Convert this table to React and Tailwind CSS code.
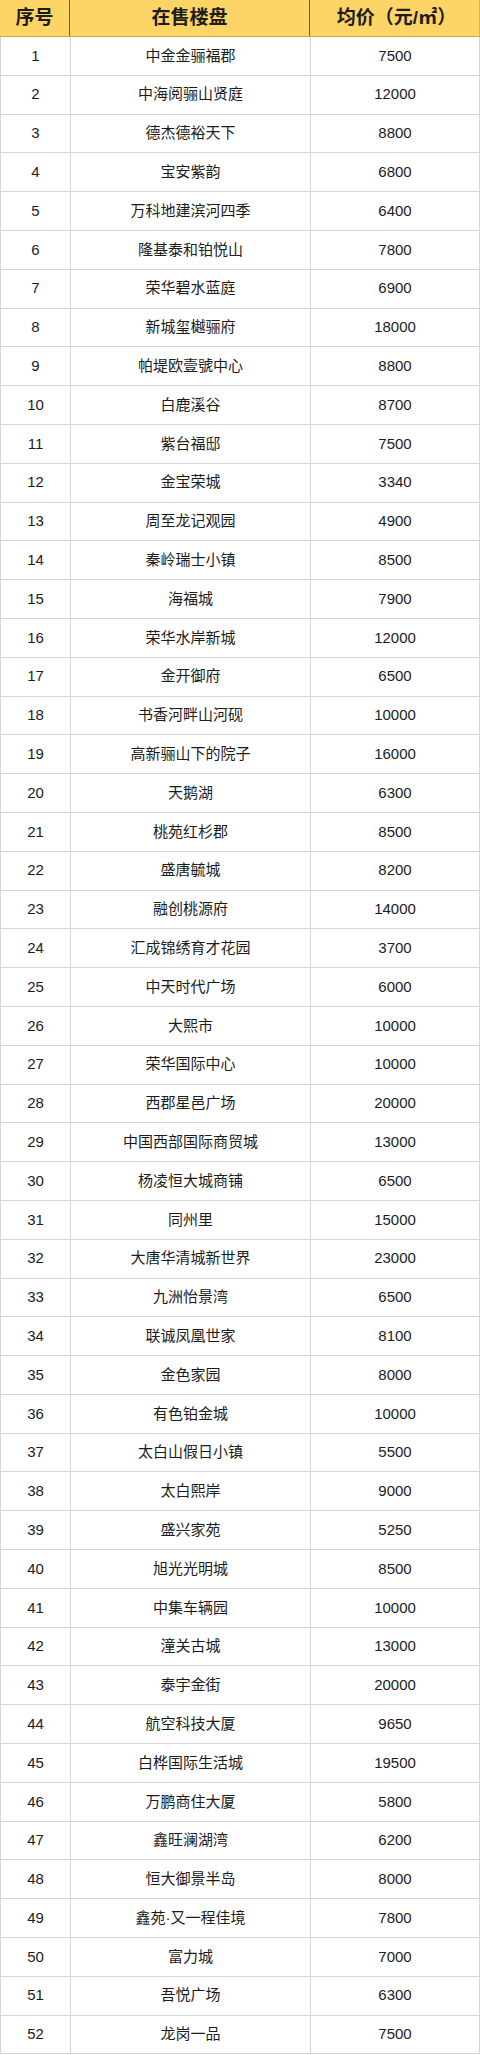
import React from 'react';

const rows = [
  ['中金金骊福郡', 7500],
  ['中海阅骊山贤庭', 12000],
  ['德杰德裕天下', 8800],
  ['宝安紫韵', 6800],
  ['万科地建滨河四季', 6400],
  ['隆基泰和铂悦山', 7800],
  ['荣华碧水蓝庭', 6900],
  ['新城玺樾骊府', 18000],
  ['帕堤欧壹號中心', 8800],
  ['白鹿溪谷', 8700],
  ['紫台福邸', 7500],
  ['金宝荣城', 3340],
  ['周至龙记观园', 4900],
  ['秦岭瑞士小镇', 8500],
  ['海福城', 7900],
  ['荣华水岸新城', 12000],
  ['金开御府', 6500],
  ['书香河畔山河砚', 10000],
  ['高新骊山下的院子', 16000],
  ['天鹅湖', 6300],
  ['桃苑红杉郡', 8500],
  ['盛唐毓城', 8200],
  ['融创桃源府', 14000],
  ['汇成锦绣育才花园', 3700],
  ['中天时代广场', 6000],
  ['大熙市', 10000],
  ['荣华国际中心', 10000],
  ['西郡星邑广场', 20000],
  ['中国西部国际商贸城', 13000],
  ['杨凌恒大城商铺', 6500],
  ['同州里', 15000],
  ['大唐华清城新世界', 23000],
  ['九洲怡景湾', 6500],
  ['联诚凤凰世家', 8100],
  ['金色家园', 8000],
  ['有色铂金城', 10000],
  ['太白山假日小镇', 5500],
  ['太白熙岸', 9000],
  ['盛兴家苑', 5250],
  ['旭光光明城', 8500],
  ['中集车辆园', 10000],
  ['潼关古城', 13000],
  ['泰宇金街', 20000],
  ['航空科技大厦', 9650],
  ['白桦国际生活城', 19500],
  ['万鹏商住大厦', 5800],
  ['鑫旺澜湖湾', 6200],
  ['恒大御景半岛', 8000],
  ['鑫苑·又一程佳境', 7800],
  ['富力城', 7000],
  ['吾悦广场', 6300],
  ['龙岗一品', 7500],
];

const font = { fontFamily: '"Liberation Sans", "Noto Sans CJK SC", sans-serif' };

export default function App() {
  return (
    <div className="w-[480px] bg-white text-[#1c1c1c]" style={font}>
      {/* 表头 */}
      <div className="grid grid-cols-[70px_240px_1fr] h-[37px] bg-[#fdd466] border-b border-[#c9a94a] text-[19px] font-bold">
        <div className="flex items-center justify-center border-r border-[#6b5a2a]">序号</div>
        <div className="flex items-center justify-center border-r border-[#6b5a2a]">在售楼盘</div>
        <div className="flex items-center justify-center border-r border-[#d8b450] pl-1">均价（元/㎡）</div>
      </div>

      {/* 楼盘列表 */}
      {rows.map(([name, price], i) => (
        <div
          key={i}
          className="grid grid-cols-[70px_240px_1fr] h-[38.8px] border-b border-l border-r border-[#d6d6d6] text-[15px]"
        >
          <div className="flex items-center justify-center border-r border-[#d6d6d6]">{i + 1}</div>
          <div className="flex items-center justify-center border-r border-[#d6d6d6]">{name}</div>
          <div className="flex items-center justify-center">{price}</div>
        </div>
      ))}
    </div>
  );
}
